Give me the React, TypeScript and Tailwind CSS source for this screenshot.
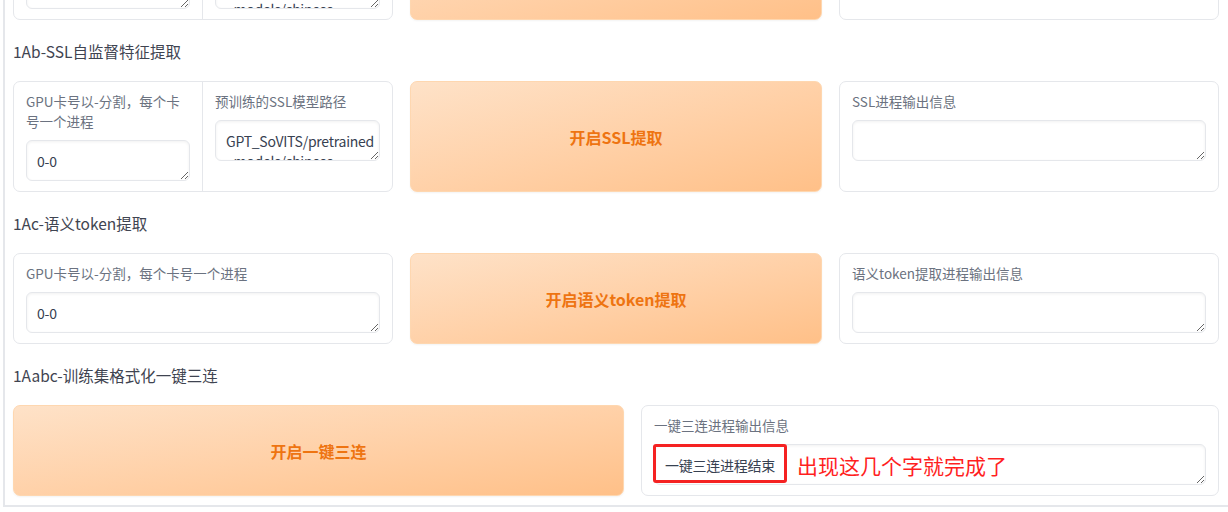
const areaCls =
  'block w-full h-[41px] resize-y overflow-hidden rounded-[6px] border border-[#e5e7eb] bg-white pl-[10px] pr-0 py-[10px] text-[14px] leading-[20px] tracking-[-0.25px] text-[#374151] shadow-[inset_0_1px_3px_rgba(0,0,0,0.06)] outline-none'

function Field({ label, value = '' }: { label: string; value?: string }) {
  return (
    <div className="flex flex-col gap-2 px-3 pb-[10px] pt-[9px]">
      <label className="h-auto text-[13.5px] leading-[20px] text-[#6b7280]">{label}</label>
      <textarea className={`${areaCls} mt-px`} defaultValue={value} rows={1} />
    </div>
  )
}

function Card({ children, className = '' }: { children: React.ReactNode; className?: string }) {
  return (
    <div className={`rounded-[7px] border border-[#e5e7eb] bg-white ${className}`}>{children}</div>
  )
}

function StartButton({ text }: { text: string }) {
  return (
    <button className="flex items-center justify-center rounded-[7px] border border-[#fed7b0] bg-gradient-to-br from-[#fee2c8] to-[#ffc088] text-[16px] font-bold text-[#ee7411] shadow-[0_1px_2px_rgba(0,0,0,0.05)]">
      {text}
    </button>
  )
}

function Heading({ children }: { children: React.ReactNode }) {
  return <div className="h-[29px] pt-px text-[15.5px] leading-[29px] text-[#3f4451]">{children}</div>
}

const gpuLabel = 'GPU卡号以-分割，每个卡号一个进程'
// zero-width space lets the path wrap right before "_models", as the textarea does in the app
const sslPath = 'GPT_SoVITS/pretrained\u200B_models/chinese-hubert-base'
const bertPath = 'GPT_SoVITS/pretrained\u200B_models/chinese-roberta-wwm-ext-large'

export default function App() {
  return (
    <div className="min-h-[512px] bg-white pl-[3px] font-['Noto_Sans_CJK_SC','Noto_Sans',sans-serif]">
      <div className="flex flex-col gap-4 overflow-hidden border-b-2 border-l-2 border-[#e5e7eb] pb-[9px] pl-[8px] pr-[7px]">
        {/* tail of the 1Aa row, scrolled mostly out of view */}
        <div className="-mt-[91px] grid grid-cols-[380px_412px_380px] gap-[17px]">
          <Card className="grid grid-cols-2 divide-x divide-[#e5e7eb]">
            <Field label={gpuLabel} value="" />
            <Field label={gpuLabel} value={bertPath} />
          </Card>
          <StartButton text="开启文本获取" />
          <Card>
            <Field label="文本进程输出信息" />
          </Card>
        </div>

        <Heading>1Ab-SSL自监督特征提取</Heading>
        <div className="grid grid-cols-[380px_412px_380px] gap-[17px]">
          <Card className="grid grid-cols-2 divide-x divide-[#e5e7eb]">
            <Field label={gpuLabel} value="0-0" />
            <Field label="预训练的SSL模型路径" value={sslPath} />
          </Card>
          <StartButton text="开启SSL提取" />
          <Card>
            <Field label="SSL进程输出信息" />
          </Card>
        </div>

        <Heading>1Ac-语义token提取</Heading>
        <div className="grid grid-cols-[380px_412px_380px] gap-[17px]">
          <Card>
            <Field label={gpuLabel} value="0-0" />
          </Card>
          <StartButton text="开启语义token提取" />
          <Card>
            <Field label="语义token提取进程输出信息" />
          </Card>
        </div>

        <Heading>1Aabc-训练集格式化一键三连</Heading>
        <div className="grid grid-cols-[611px_578px] gap-[17px]">
          <StartButton text="开启一键三连" />
          <Card>
            <div className="flex flex-col gap-2 px-3 pb-[10px] pt-[9px]">
              <label className="text-[13.5px] leading-[20px] text-[#6b7280]">一键三连进程输出信息</label>
              <div className="relative mt-px">
                <textarea className={areaCls} defaultValue="一键三连进程结束" rows={1} />
                {/* screenshot annotation */}
                <div className="pointer-events-none absolute left-[-1px] top-0 h-[39px] w-[134px] rounded-[3px] border-[3px] border-[#f52222]" />
                <span className="pointer-events-none absolute left-[143px] top-[7px] text-[21px] leading-[28px] text-[#ff1f1f]">
                  出现这几个字就完成了
                </span>
              </div>
            </div>
          </Card>
        </div>
      </div>
    </div>
  )
}
